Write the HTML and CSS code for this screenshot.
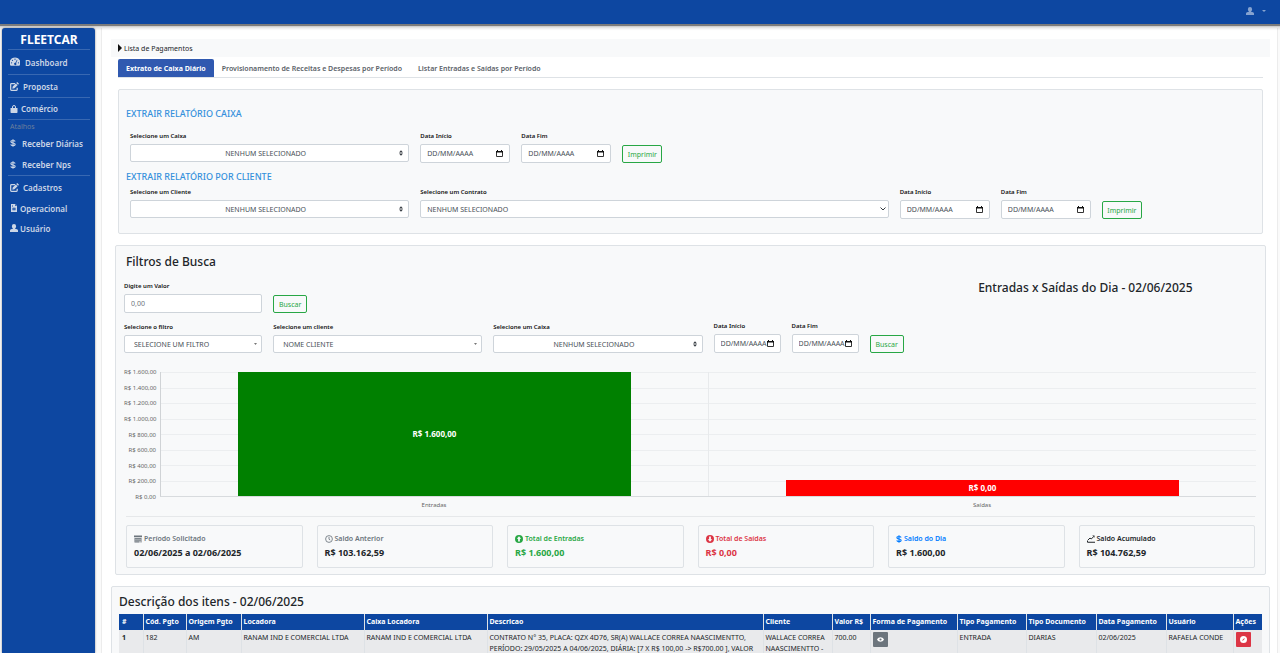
FILE: index.html
```html
<!DOCTYPE html>
<html lang="pt-BR">
<head>
<meta charset="utf-8">
<meta name="viewport" content="width=device-width, initial-scale=1">
<title>Fleetcar - Lista de Pagamentos</title>
<link rel="stylesheet" href="styles.css">
</head>
<body>
<svg class="sprite" aria-hidden="true">
  <symbol id="i-user" viewBox="0 0 16 16"><path d="M8 0a4.200 4.400 0 0 1 4.200 4.400c0 1.800-.8 3.400-2 4.200v.8l3.800 1c1.200.4 2 1.200 2 2.400V16H0v-3.200c0-1.200.8-2 2-2.400l3.800-1v-.8c-1.200-.8-2-2.400-2-4.200A4.200 4.400 0 0 1 8 0z"/></symbol>
  <symbol id="i-gauge" viewBox="0 0 16 16"><path fill-rule="evenodd" d="M8 1a8 8 0 0 0-6.900 13h13.800A8 8 0 0 0 8 1zM8 2.500a1 1 0 1 1 0 2 1 1 0 0 1 0-2zM4 4.200a1 1 0 1 1 0 2 1 1 0 0 1 0-2zM2.500 8.300a1 1 0 1 1 0 2 1 1 0 0 1 0-2zM13.500 8.300a1 1 0 1 1 0 2 1 1 0 0 1 0-2zM11 4.300l.9.500-2.200 5a1.800 1.800 0 1 1-1-.5z"/></symbol>
  <symbol id="i-edit" viewBox="0 0 16 16"><path d="M9 3H2.500A1.300 1.300 0 0 0 1.200 4.300v9.200a1.300 1.300 0 0 0 1.300 1.300h9a1.300 1.300 0 0 0 1.300-1.300V10" fill="none" stroke="currentColor" stroke-width="2.200"/><path d="M12.800 0L16 3.200l-1.700 1.700-3.200-3.200zM10.300 2.500l3.200 3.200-5.500 5.500-3.800.6.600-3.800z"/></symbol>
  <symbol id="i-bag" viewBox="0 0 16 16"><path d="M1 6h14v8.500a1.500 1.500 0 0 1-1.500 1.500h-11A1.500 1.500 0 0 1 1 14.500z"/><path d="M5 6V4a3 3 0 0 1 6 0v2" fill="none" stroke="currentColor" stroke-width="2"/></symbol>
  <symbol id="i-dollar" viewBox="0 0 16 16"><path d="M12.300 5C11.800 3.500 10 2.900 8 2.900 5.800 2.900 3.800 3.800 3.800 5.300c0 3.600 8.600 1.700 8.600 5.300 0 1.600-2 2.600-4.400 2.600s-4.100-.9-4.500-2.500M8 .3v15.400" fill="none" stroke="currentColor" stroke-width="2.200"/></symbol>
  <symbol id="i-file" viewBox="0 0 16 16"><path fill-rule="evenodd" d="M2 0h8v4h4v12H2zM11 0l3 3h-3zM4 2h2v1H4zM4 4h2v1H4zM5 7.500h6v5H5zM7 9v2h2V9z"/></symbol>
  <symbol id="i-calendar" viewBox="0 0 16 16"><path fill-rule="evenodd" d="M0 1h16v3.500H0zM1 5.800h14V15H1zM3 7.500v2h2v-2zM7 7.500v2h2v-2zM11 7.500v2h2v-2zM3 11v2h2v-2zM7 11v2h2v-2zM11 11v4h2v-4z"/></symbol>
  <symbol id="i-clock" viewBox="0 0 16 16"><path d="M8 1.200a6.800 6.800 0 1 1 0 13.600A6.800 6.800 0 0 1 8 1.200M8 4v4.500l2.500 1.500" fill="none" stroke="currentColor" stroke-width="1.700"/></symbol>
  <symbol id="i-up" viewBox="0 0 16 16"><path fill-rule="evenodd" d="M8 0a8 8 0 1 1 0 16A8 8 0 0 1 8 0zM8 2.500L3.500 7.300h2.700V13h3.600V7.300h2.700z"/></symbol>
  <symbol id="i-down" viewBox="0 0 16 16"><path fill-rule="evenodd" d="M8 0a8 8 0 1 1 0 16A8 8 0 0 1 8 0zM8 13.500L3.500 8.700h2.700V3h3.600v5.700h2.700z"/></symbol>
  <symbol id="i-chart" viewBox="0 0 16 16"><path d="M1 11v3.500h15M2 10l4-4 2.500 2L13 3.500" fill="none" stroke="currentColor" stroke-width="2"/><path d="M10.500 1H15v4.500z"/></symbol>
  <symbol id="i-eye" viewBox="0 0 16 16"><path fill-rule="evenodd" d="M0 8c2-3.500 4.700-5 8-5s6 1.500 8 5c-2 3.500-4.700 5-8 5S2 11.500 0 8zM8 5.500a2.500 2.500 0 1 0 0 5 2.500 2.500 0 0 0 0-5z"/></symbol>
  <symbol id="i-ban" viewBox="0 0 16 16"><path fill-rule="evenodd" d="M8 0a8 8 0 1 1 0 16A8 8 0 0 1 8 0zM5 9.500L6.500 11 11 6.500 9.500 5z"/></symbol>
</svg>

<header class="topbar">
  <button class="user-menu" type="button" aria-label="Menu do usuário">
    <svg class="icon"><use href="#i-user"/></svg><span class="caret"></span>
  </button>
</header>

<div class="shell">
  <nav class="sidebar" aria-label="Menu principal">
    <p class="brand">FLEETCAR</p>
    <a class="nav-link nav-dash" href="#"><svg class="icon"><use href="#i-gauge"/></svg>Dashboard</a>
    <a class="nav-link nav-main" href="#"><svg class="icon"><use href="#i-edit"/></svg>Proposta</a>
    <a class="nav-link nav-shop" href="#"><svg class="icon"><use href="#i-bag"/></svg>Comércio</a>
    <p class="nav-caption">Atalhos</p>
    <a class="nav-link nav-short" href="#"><svg class="icon"><use href="#i-dollar"/></svg>Receber Diárias</a>
    <a class="nav-link nav-short nav-end" href="#"><svg class="icon"><use href="#i-dollar"/></svg>Receber Nps</a>
    <a class="nav-link nav-plain nav-first" href="#"><svg class="icon"><use href="#i-edit"/></svg>Cadastros</a>
    <a class="nav-link nav-plain" href="#"><svg class="icon"><use href="#i-file"/></svg>Operacional</a>
    <a class="nav-link nav-plain" href="#"><svg class="icon"><use href="#i-user"/></svg>Usuário</a>
  </nav>

  <main class="content">
    <div class="breadcrumb"><span class="marker"></span>Lista de Pagamentos</div>

    <div class="tabs">
      <a class="tab tab-active" href="#">Extrato de Caixa Diário</a>
      <a class="tab" href="#">Provisionamento de Receitas e Despesas por Período</a>
      <a class="tab" href="#">Listar Entradas e Saídas por Período</a>
    </div>

    <section class="panel panel-report">
      <h2 class="report-title">EXTRAIR RELATÓRIO CAIXA</h2>
      <form class="fields fields-cash">
        <div class="field"><label for="cx">Selecione um Caixa</label><select id="cx" class="control pick pick-center"><option>NENHUM SELECIONADO</option></select></div>
        <div class="field"><label for="cx-ini">Data Início</label><input id="cx-ini" class="control date" type="text" value="DD/MM/AAAA"></div>
        <div class="field"><label for="cx-fim">Data Fim</label><input id="cx-fim" class="control date" type="text" value="DD/MM/AAAA"></div>
        <button class="btn-outline" type="button">Imprimir</button>
      </form>
      <h2 class="report-title">EXTRAIR RELATÓRIO POR CLIENTE</h2>
      <form class="fields fields-client">
        <div class="field"><label for="cl">Selecione um Cliente</label><select id="cl" class="control pick pick-center"><option>NENHUM SELECIONADO</option></select></div>
        <div class="field"><label for="ct">Selecione um Contrato</label><select id="ct" class="control pick pick-native"><option>NENHUM SELECIONADO</option></select></div>
        <div class="field"><label for="cl-ini">Data Início</label><input id="cl-ini" class="control date" type="text" value="DD/MM/AAAA"></div>
        <div class="field"><label for="cl-fim">Data Fim</label><input id="cl-fim" class="control date" type="text" value="DD/MM/AAAA"></div>
        <button class="btn-outline" type="button">Imprimir</button>
      </form>
    </section>

    <section class="panel panel-filter">
      <h2 class="section-title">Filtros de Busca</h2>
      <form class="filters">
        <div class="field"><label for="valor">Digite um Valor</label><input id="valor" class="control" type="text" placeholder="0,00"></div>
        <button class="btn-outline btn-value" type="button">Buscar</button>
        <h2 class="chart-title">Entradas x Saídas do Dia - 02/06/2025</h2>
        <div class="field"><label for="filtro">Selecione o filtro</label><select id="filtro" class="control pick pick-small"><option>SELECIONE UM FILTRO</option></select></div>
        <div class="field"><label for="cliente">Selecione um cliente</label><select id="cliente" class="control pick pick-small"><option>NOME CLIENTE</option></select></div>
        <div class="field"><label for="caixa">Selecione um Caixa</label><select id="caixa" class="control pick pick-center"><option>NENHUM SELECIONADO</option></select></div>
        <div class="field"><label for="ini">Data Início</label><input id="ini" class="control date" type="text" value="DD/MM/AAAA"></div>
        <div class="field"><label for="fim">Data Fim</label><input id="fim" class="control date" type="text" value="DD/MM/AAAA"></div>
        <button class="btn-outline" type="button">Buscar</button>
      </form>

      <div class="chart">
        <div class="axis-y">
          <span>R$ 1.600,00</span><span>R$ 1.400,00</span><span>R$ 1.200,00</span><span>R$ 1.000,00</span><span>R$ 800,00</span><span>R$ 600,00</span><span>R$ 400,00</span><span>R$ 200,00</span><span>R$ 0,00</span>
        </div>
        <div class="plot">
          <div class="gridlines"><i></i><i></i><i></i><i></i><i></i><i></i><i></i><i></i></div>
          <div class="slot"><div class="bar bar-in" style="height:100%">R$ 1.600,00</div></div>
          <div class="slot"><div class="bar bar-out" style="height:13%">R$ 0,00</div></div>
        </div>
        <div class="axis-x"><span>Entradas</span><span>Saídas</span></div>
      </div>

      <div class="cards">
        <div class="card muted"><h3><svg class="icon"><use href="#i-calendar"/></svg>Período Solicitado</h3><p class="dark">02/06/2025 a 02/06/2025</p></div>
        <div class="card muted"><h3><svg class="icon"><use href="#i-clock"/></svg>Saldo Anterior</h3><p class="dark">R$ 103.162,59</p></div>
        <div class="card green"><h3><svg class="icon"><use href="#i-up"/></svg>Total de Entradas</h3><p>R$ 1.600,00</p></div>
        <div class="card red"><h3><svg class="icon"><use href="#i-down"/></svg>Total de Saídas</h3><p>R$ 0,00</p></div>
        <div class="card blue"><h3><svg class="icon icon-slim" viewBox="3 0 10 16"><use href="#i-dollar" width="16" height="16"/></svg>Saldo do Dia</h3><p class="dark">R$ 1.600,00</p></div>
        <div class="card"><h3><svg class="icon"><use href="#i-chart"/></svg>Saldo Acumulado</h3><p class="dark">R$ 104.762,59</p></div>
      </div>
    </section>

    <section class="panel panel-items">
      <h2 class="section-title">Descrição dos itens - 02/06/2025</h2>
      <table class="items">
        <colgroup><col class="w-24"><col class="w-43"><col class="w-55"><col class="w-123"><col class="w-123"><col class="w-276"><col class="w-69"><col class="w-38"><col class="w-87"><col class="w-69"><col class="w-70"><col class="w-70"><col class="w-67"><col class="w-29"></colgroup>
        <thead>
          <tr><th>#</th><th>Cód. Pgto</th><th>Origem Pgto</th><th>Locadora</th><th>Caixa Locadora</th><th>Descricao</th><th>Cliente</th><th>Valor R$</th><th>Forma de Pagamento</th><th>Tipo Pagamento</th><th>Tipo Documento</th><th>Data Pagamento</th><th>Usuário</th><th>Ações</th></tr>
        </thead>
        <tbody>
          <tr><th scope="row">1</th><td>182</td><td>AM</td><td>RANAM IND E COMERCIAL LTDA</td><td>RANAM IND E COMERCIAL LTDA</td><td>CONTRATO N° 35, PLACA: QZX 4D76, SR(A) WALLACE CORREA NAASCIMENTTO, PERÍODO: 29/05/2025 A 04/06/2025, DIÁRIA: [7 X R$ 100,00 -&gt; R$700.00 ], VALOR</td><td>WALLACE CORREA NAASCIMENTTO -</td><td>700.00</td><td><button class="btn-icon btn-gray" type="button" aria-label="Ver"><svg class="icon"><use href="#i-eye"/></svg></button></td><td>ENTRADA</td><td>DIARIAS</td><td>02/06/2025</td><td>RAFAELA CONDE</td><td><button class="btn-icon btn-red" type="button" aria-label="Cancelar"><svg class="icon"><use href="#i-ban"/></svg></button></td></tr>
        </tbody>
      </table>
    </section>
  </main>
</div>
</body>
</html>
```
FILE: styles.css
```css
* { box-sizing: border-box; }

body {
  margin: 0;
  height: 100vh;
  display: flex;
  flex-direction: column;
  overflow: hidden;
  background: #fafafa;
  color: #212529;
  font-family: "Noto Sans", "Open Sans", sans-serif;
  font-size: 7px;
  line-height: 11px;
}

h2, h3, p { margin: 0; }
a { color: inherit; text-decoration: none; }
button, input, select { font: inherit; }

.sprite { display: none; }
.icon { width: 8px; height: 8px; fill: currentColor; flex: none; }

/* Top bar */
.topbar {
  flex: none;
  height: 24px;
  display: flex;
  justify-content: flex-end;
  align-items: center;
  padding-right: 14px;
  background: #0d47a1;
  box-shadow: 0 1px 1px 1px rgba(0, 0, 0, .45), 0 2px 2px 3px rgba(0, 0, 0, .1);
  z-index: 1;
}
.user-menu {
  display: flex;
  align-items: center;
  gap: 8px;
  padding: 0 0 2px;
  border: 0;
  background: none;
  color: #86a3d0;
}
.caret {
  border: 2px solid transparent;
  border-top-color: currentColor;
  border-bottom: 0;
}

.shell {
  flex: 1;
  min-height: 0;
  display: flex;
  gap: 6px;
  padding: 4px 2px 0;
}

/* Sidebar */
.sidebar {
  flex: none;
  width: 93px;
  padding: 4px 5px 4px 6px;
  border-radius: 3px 3px 0 0;
  background: #0d47a1;
  box-shadow: 0 0 2px rgba(0, 0, 0, .5);
  color: #ccd6e6;
  z-index: 2;
}
.brand {
  height: 18px;
  line-height: 16px;
  border-bottom: 1px solid #3868b2;
  color: #fff;
  font-size: 12px;
  font-weight: 700;
  text-align: center;
}
.nav-link {
  display: flex;
  align-items: center;
  gap: 4px;
  padding-left: 2px;
  font-size: 8px;
  font-weight: 600;
}
.nav-dash { height: 25px; gap: 5px; border-bottom: 1px solid #3868b2; }
.nav-dash .icon { width: 10px; height: 10px; }
.nav-main { height: 23px; border-bottom: 1px solid #3868b2; }
.nav-main .icon, .nav-first .icon { width: 9px; height: 9px; }
.nav-shop { height: 22px; gap: 3px; border-bottom: 1px solid #3868b2; }
.nav-caption { padding: 2px 2px 0; color: #6c7f9c; font-size: 7px; line-height: 10px; }
.nav-short { height: 22px; gap: 5px; padding-left: 1px; }
.nav-end { border-bottom: 1px solid #3868b2; }
.nav-plain { height: 20px; gap: 2px; }
.nav-first { height: 22px; gap: 4px; }

/* Content */
.content {
  flex: 1;
  min-width: 0;
  padding: 11px 7px 0 9px;
  border: 1px solid #ececec;
  border-width: 0 1px;
  background: #fff;
  overflow: hidden;
}
.breadcrumb {
  display: flex;
  align-items: center;
  gap: 2px;
  height: 18px;
  padding-left: 7px;
  background: #f8f9fa;
}
.marker {
  border: 4px solid transparent;
  border-left-color: #111;
  border-right: 0;
}
.tabs {
  display: flex;
  margin: 2px 7px 0;
  border-bottom: 1px solid #dee2e6;
  color: #5a6168;
  font-weight: 600;
}
.tab { padding: 4px 8px 3px; }
.tab-active {
  border-radius: 2px 2px 0 0;
  background: #3059b0;
  color: #fff;
  font-weight: 700;
}

.panel {
  border: 1px solid #dee2e6;
  border-radius: 2px;
  background: #f8f9fa;
}
.section-title, .chart-title {
  font-size: 12px;
  font-weight: 500;
  line-height: 16px;
}

/* Form controls */
.field { display: flex; flex-direction: column; gap: 4px; min-width: 0; }
.field label { color: #111; font-size: 6px; font-weight: 600; line-height: 8px; }
.control {
  width: 100%;
  height: 19px;
  padding: 0 6px;
  border: 1px solid #ced4da;
  border-radius: 2px;
  background: #fff;
  color: #495057;
}
.control::placeholder { color: #6c757d; opacity: 1; }
.pick {
  height: 18px;
  appearance: none;
  background-position: right 5px center;
  background-repeat: no-repeat;
}
.pick-center {
  padding-right: 14px;
  text-align-last: center;
  background-image: url("data:image/svg+xml,%3Csvg xmlns='http://www.w3.org/2000/svg' width='4' height='6' viewBox='0 0 4 6'%3E%3Cpath d='M0 2.500 2 .3l2 2.200zM0 3.500 2 5.700l2-2.200z' fill='%23343a40'/%3E%3C/svg%3E");
}
.pick-native {
  background-position: right 2px center;
  background-image: url("data:image/svg+xml,%3Csvg xmlns='http://www.w3.org/2000/svg' width='6' height='4' viewBox='0 0 6 4'%3E%3Cpath d='M.5.5 3 3 5.500.5' fill='none' stroke='%23343a40'/%3E%3C/svg%3E");
}
.pick-small {
  padding-left: 9px;
  background-position: right 4px center;
  background-image: url("data:image/svg+xml,%3Csvg xmlns='http://www.w3.org/2000/svg' width='3' height='2' viewBox='0 0 3 2'%3E%3Cpath d='M0 0h3L1.500 2z' fill='%23777'/%3E%3C/svg%3E");
}
.date {
  background-image: url("data:image/svg+xml,%3Csvg xmlns='http://www.w3.org/2000/svg' width='7' height='7' viewBox='0 0 7 7'%3E%3Cpath d='M.5 1.500h6v5h-6z' fill='none' stroke='%23333'/%3E%3Cpath d='M0 1h7v1.500H0zM1 0h1v1H1zM5 0h1v1H5z' fill='%23111'/%3E%3C/svg%3E");
  background-position: right 6px center;
  background-repeat: no-repeat;
}
.btn-outline {
  height: 18px;
  padding: 0;
  border: 1px solid #28a745;
  border-radius: 2px;
  background: transparent;
  color: #28a745;
}

/* Report panel */
.panel-report { margin: 11px 7px 0; padding: 18px 10px 14px 11px; }
.report-title {
  margin-left: -4px;
  color: #3490dc;
  font-size: 9px;
  font-weight: 500;
  line-height: 12px;
}
.fields { display: grid; column-gap: 11px; align-items: end; }
.fields-cash { grid-template-columns: 279fr 90fr 90fr 40fr 578fr; padding: 12px 0 8px; }
.fields-client { grid-template-columns: 279fr 468fr 90fr 90fr 40fr 99fr; padding-top: 5px; }
.fields .field { align-self: start; }

/* Filter panel */
.panel-filter { margin: 11px 4px 0; padding: 8px 9px 6px 8px; }
.panel-filter .section-title { padding-left: 2px; }
.filters {
  display: grid;
  grid-template-columns: 138fr 209fr 209fr 67fr 67fr 34fr 341fr;
  column-gap: 11px;
  row-gap: 9px;
  align-items: end;
  padding-top: 12px;
}
.btn-value { justify-self: start; width: 34px; }
.chart-title { grid-column: 7; align-self: start; line-height: 12px; text-align: center; }
.filters .date { background-position: right 6px center; }

/* Chart */
.chart {
  display: grid;
  grid-template-columns: 32px 1fr;
  column-gap: 4px;
  padding-top: 19px;
  color: #666;
  font-size: 6px;
  line-height: 8px;
}
.axis-y {
  display: flex;
  flex-direction: column;
  justify-content: space-between;
  margin: -4px 0;
  text-align: right;
  white-space: nowrap;
}
.plot {
  position: relative;
  display: flex;
  height: 125px;
  border-left: 1px solid #d0d3d6;
  border-bottom: 1px solid #d8dbde;
}
.gridlines {
  position: absolute;
  inset: 0;
  display: grid;
  grid-template-rows: repeat(8, 1fr);
}
.gridlines i { border-top: 1px solid #eceef0; }
.slot {
  flex: 1;
  display: flex;
  justify-content: center;
  align-items: flex-end;
  z-index: 1;
}
.slot + .slot { border-left: 1px solid #e8eaec; }
.bar {
  width: 72%;
  display: flex;
  align-items: center;
  justify-content: center;
  color: #fff;
  font-size: 8px;
  font-weight: 700;
}
.bar-in { background: #008000; }
.bar-out { background: #f00; }
.axis-x { grid-column: 2; display: flex; padding-top: 4px; }
.axis-x span { flex: 1; text-align: center; }

/* Summary cards */
.cards {
  display: grid;
  grid-template-columns: repeat(6, 1fr);
  gap: 14px;
  margin: 7px 1px 0 2px;
  padding-top: 8px;
  border-top: 1px solid #e6e8ea;
}
.card {
  padding: 6px 7px;
  border: 1px solid #dee2e6;
  border-radius: 2px;
}
.card h3 {
  display: flex;
  align-items: center;
  gap: 2px;
  font-size: 7px;
  font-weight: 600;
  line-height: 13px;
}
.card p { font-size: 9px; font-weight: 700; line-height: 16px; }
.icon-slim { width: 6px; }
.muted { color: #6c757d; }
.green { color: #28a745; }
.red { color: #dc3545; }
.blue { color: #007bff; }
.dark { color: #212529; }

/* Items table */
.panel-items { margin-top: 11px; padding: 7px; }
.items { width: 100%; margin-top: 4px; border-collapse: collapse; table-layout: fixed; }
.items th, .items td {
  padding: 2px 0 2px 2px;
  border-left: 1px solid #dee2e6;
  text-align: left;
  vertical-align: top;
}
.items th:first-child { padding-left: 3px; border-left: 0; }
.items thead th { padding-bottom: 3px; background: #0d47a1; color: #fff; font-weight: 700; white-space: nowrap; }
.items tbody { background: #e9eaec; }
.items .btn-icon {
  display: flex;
  align-items: center;
  justify-content: center;
  width: 15px;
  height: 15px;
  padding: 0;
  border: 0;
  border-radius: 1px;
  color: #fff;
}
.btn-icon .icon { width: 7px; height: 7px; }
.btn-gray { background: #6c757d; }
.btn-red { background: #dc3545; }

.w-24 { width: 24px; }
.w-29 { width: 29px; }
.w-38 { width: 38px; }
.w-43 { width: 43px; }
.w-55 { width: 55px; }
.w-67 { width: 67px; }
.w-69 { width: 69px; }
.w-70 { width: 70px; }
.w-87 { width: 87px; }
.w-123 { width: 123px; }
.w-276 { width: 276px; }
```
